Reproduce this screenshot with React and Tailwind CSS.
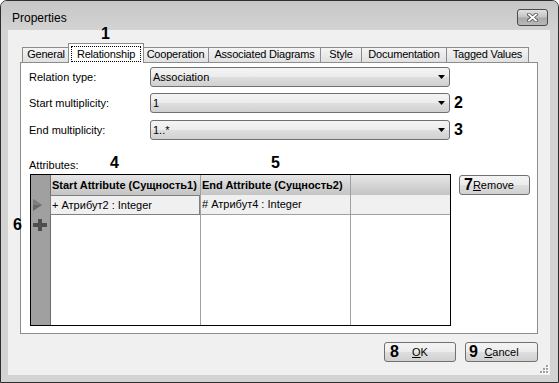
import React from 'react';

const tabs = [
  { label: 'General', cls: 'w-[48px]' },
  { label: 'Relationship', cls: 'w-[76px] -ml-[2px]', active: true },
  { label: 'Cooperation', cls: 'w-[67px] -ml-[2px]' },
  { label: 'Associated Diagrams', cls: 'w-[113px] -ml-px' },
  { label: 'Style', cls: 'w-[42px] -ml-px' },
  { label: 'Documentation', cls: 'w-[86px] -ml-px' },
  { label: 'Tagged Values', cls: 'w-[83px] -ml-px' },
];

const btnBg =
  'bg-[linear-gradient(to_bottom,#f4f4f4_0%,#ececec_48%,#dedede_52%,#d0d0d0_100%)]';

// bold digits drawn over the dialog
const mark = 'absolute font-bold text-[16px] leading-none text-black';

function Combo({ value }) {
  return (
    <div
      className={`w-[300px] h-[20px] rounded-[3px] border border-[#707070] ${btnBg} flex items-center justify-between pl-[2px] pr-[4px]`}
    >
      <span>{value}</span>
      <svg width="7" height="4" viewBox="0 0 7 4">
        <path d="M0 0h7L3.5 4z" fill="#000" />
      </svg>
    </div>
  );
}

function FieldRow({ label, value, className, children }) {
  return (
    <div className={`flex items-center h-[20px] ${className}`}>
      <div className="w-[129px] pl-[8px]">{label}</div>
      <Combo value={value} />
      {children}
    </div>
  );
}

function Column({ width, header, row1, focused, last }) {
  return (
    <div className={`${width} flex flex-col ${last ? '' : 'border-r border-[#a0a0a0]'}`}>
      <div className="h-[20px] bg-gradient-to-b from-[#e6e6e6] to-[#c4c4c4] font-bold flex items-center pl-px whitespace-nowrap overflow-hidden">
        {header}
      </div>
      <div
        className={`h-[20px] bg-[#f0f0f0] flex items-center whitespace-nowrap overflow-hidden ${
          focused ? 'border border-[#7f7f7f] -ml-px pl-px' : 'border-b border-[#a0a0a0] pl-px'
        }`}
      >
        {row1}
      </div>
      <div className="flex-1 bg-white" />
    </div>
  );
}

export default function App() {
  return (
    <div className="w-[559px] h-[383px] relative bg-[#d3d3d3] border border-[#2e2e2e] rounded-t-[7px] flex flex-col overflow-hidden font-['Liberation_Sans',Arial,sans-serif] text-[11px] text-black">
      {/* title bar */}
      <div className="h-[29px] shrink-0 flex justify-between items-start bg-gradient-to-b from-[#c6c6c6] to-[#d3d3d3]">
        <span className="mt-[10px] ml-[11px] text-[12px] leading-[14px]">Properties</span>
        <div className="mt-[8px] mr-[10px] w-[31px] h-[17px] rounded-[3px] border border-[#4a4a4a] bg-[linear-gradient(to_bottom,#e2e2e2_0%,#c4c4c4_45%,#a9a9a9_55%,#b9b9b9_100%)] flex items-center justify-center">
          <svg width="11" height="9" viewBox="0 0 11 9">
            <path d="M2 1.5L9 7.5M9 1.5L2 7.5" stroke="#5a5a5a" strokeWidth="3.6" strokeLinecap="square" />
            <path d="M2 1.5L9 7.5M9 1.5L2 7.5" stroke="#fff" strokeWidth="1.8" strokeLinecap="square" />
          </svg>
        </div>
      </div>

      {/* body */}
      <div className="flex-1 pl-[7px] pr-[8px] pb-[7px] flex">
        <div className="flex-1 bg-[#f0f0f0] relative pt-[13px] px-[12px] flex flex-col">
          {/* tabs */}
          <div className="flex items-end h-[20px] pl-[2px] tracking-[-0.2px]">
            {tabs.map((t) =>
              t.active ? (
                <div
                  key={t.label}
                  className={`${t.cls} relative z-10 h-[20px] bg-white border border-b-0 border-[#8c8c8c] p-[2px] pb-[1px]`}
                >
                  <div className="h-full border border-dotted border-black flex items-center justify-center">
                    {t.label}
                  </div>
                </div>
              ) : (
                <div
                  key={t.label}
                  className={`${t.cls} h-[16px] border border-[#8c8c8c] bg-gradient-to-b from-[#f4f4f4] to-[#e1e1e1] flex items-center justify-center pb-[2px]`}
                >
                  {t.label}
                </div>
              )
            )}
          </div>

          {/* panel */}
          <div className="-mt-px h-[272px] border border-[#8c8c8c] bg-white flex flex-col">
            <FieldRow label="Relation type:" value="Association" className="mt-[4px]" />
            <FieldRow label="Start multiplicity:" value="1" className="mt-[6px]">
              <span className="ml-[4px] font-bold text-[16px] leading-none">2</span>
            </FieldRow>
            <FieldRow label="End multiplicity:" value="1..*" className="mt-[7px]">
              <span className="ml-[4px] font-bold text-[16px] leading-none">3</span>
            </FieldRow>

            <div className="mt-[18px] pl-[8px] h-[14px] leading-[14px]">Attributes:</div>

            <div className="mt-[2px] ml-[9px] flex items-start">
              <div className="w-[421px] h-[152px] border border-black flex">
                <div className="w-[20px] bg-[#a0a0a0] border-r border-[#6e6e6e] flex flex-col">
                  <div className="h-[20px]" />
                  <div className="h-[20px] flex items-center pl-[2px]">
                    <svg width="9" height="12" viewBox="0 0 9 12">
                      <path d="M0 0L9 6L0 12z" fill="#6a6a6a" />
                      <path d="M0 0L9 6L0 6z" fill="#7e7e7e" />
                    </svg>
                  </div>
                  <div className="h-[20px] flex items-center pl-[2px]">
                    <svg width="14" height="12" viewBox="0 0 14 12">
                      <path d="M5 0h4v4h5v4H9v4H5V8H0V4h5z" fill="#4e4e4e" />
                    </svg>
                  </div>
                </div>
                <Column width="w-[150px]" header="Start Attribute (Сущность1)" row1="+ Атрибут2 : Integer" focused />
                <Column width="w-[150px]" header="End Attribute (Сущность2)" row1="# Атрибут4 : Integer" />
                <Column width="flex-1" header="" row1="" last />
              </div>

              <div
                className={`ml-[8px] mt-px w-[71px] h-[20px] rounded-[3px] border border-[#707070] ${btnBg} flex items-center pl-[4px]`}
              >
                <span className="font-bold text-[16px] leading-none">7</span>
                <span>
                  <span className="underline">R</span>emove
                </span>
              </div>
            </div>
          </div>

          {/* dialog buttons */}
          <div className="mt-[8px] flex justify-end gap-[9px]">
            <div
              className={`relative w-[72px] h-[20px] rounded-[3px] border border-[#707070] ${btnBg} flex items-center justify-center`}
            >
              <span className="absolute left-[5px] top-[1px] font-bold text-[16px] leading-none">8</span>
              <span>
                <span className="underline">O</span>K
              </span>
            </div>
            <div
              className={`relative w-[73px] h-[20px] rounded-[3px] border border-[#707070] ${btnBg} flex items-center justify-center`}
            >
              <span className="absolute left-[3px] top-[1px] font-bold text-[16px] leading-none">9</span>
              <span>
                <span className="underline">C</span>ancel
              </span>
            </div>
          </div>

          {/* size grip */}
          <svg className="absolute right-[1px] bottom-[1px]" width="9" height="9" viewBox="0 0 9 9">
            {[
              [6, 0],
              [3, 3],
              [6, 3],
              [0, 6],
              [3, 6],
              [6, 6],
            ].map(([x, y]) => (
              <g key={`${x}-${y}`}>
                <rect x={x + 1} y={y + 1} width="2" height="2" fill="#fff" />
                <rect x={x} y={y} width="2" height="2" fill="#a0a0a0" />
              </g>
            ))}
          </svg>
        </div>
      </div>

      {/* callout numbers */}
      <span className={`${mark} left-[100px] top-[25px]`}>1</span>
      <span className={`${mark} left-[109px] top-[154px]`}>4</span>
      <span className={`${mark} left-[270px] top-[154px]`}>5</span>
      <span className={`${mark} left-[12px] top-[216px]`}>6</span>
    </div>
  );
}
